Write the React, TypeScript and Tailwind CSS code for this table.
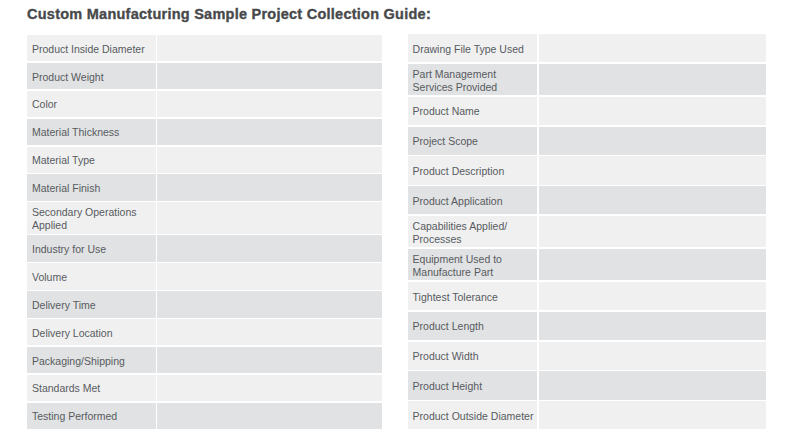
import React from "react";

type Row = { label: string[]; tall?: boolean };

const left: Row[] = [
  { label: ["Product Inside Diameter"] },
  { label: ["Product Weight"] },
  { label: ["Color"] },
  { label: ["Material Thickness"] },
  { label: ["Material Type"] },
  { label: ["Material Finish"] },
  { label: ["Secondary Operations", "Applied"], tall: true },
  { label: ["Industry for Use"] },
  { label: ["Volume"] },
  { label: ["Delivery Time"] },
  { label: ["Delivery Location"] },
  { label: ["Packaging/Shipping"] },
  { label: ["Standards Met"] },
  { label: ["Testing Performed"] },
];

const right: Row[] = [
  { label: ["Drawing File Type Used"] },
  { label: ["Part Management", "Services Provided"], tall: true },
  { label: ["Product Name"] },
  { label: ["Project Scope"] },
  { label: ["Product Description"] },
  { label: ["Product Application"] },
  { label: ["Capabilities Applied/", "Processes"], tall: true },
  { label: ["Equipment Used to", "Manufacture Part"], tall: true },
  { label: ["Tightest Tolerance"] },
  { label: ["Product Length"] },
  { label: ["Product Width"] },
  { label: ["Product Height"] },
  { label: ["Product Outside Diameter"] },
];

function Table({ rows, side }: { rows: Row[]; side: "l" | "r" }) {
  return (
    <div className={side === "l" ? "flex w-[355px] flex-col gap-y-[1.5px] mt-[1px]" : "flex w-[358.5px] flex-col gap-y-[1.5px]"}>
      {rows.map((r, i) => {
        const bg = i % 2 === 0 ? "bg-[#f0f0f0]" : "bg-[#e1e2e3]";
        const h = r.tall
          ? "h-[31.5px]"
          : side === "l"
          ? "h-[26.4px]"
          : "h-[28.3px]";
        return (
          <div key={i} className={`flex gap-x-[1.6px] ${h}`}>
            <div
              className={`${bg} ${side === "l" ? "w-[128.7px]" : "w-[129.4px]"} shrink-0 flex flex-col justify-center pl-[5px] pt-[2px] text-[10.5px] leading-[13px] text-[#575b5f]`}
            >
              {r.label.map((t, j) => (
                <span key={j} className="whitespace-nowrap">{t}</span>
              ))}
            </div>
            <div className={`${bg} flex-1`} />
          </div>
        );
      })}
    </div>
  );
}

export default function App() {
  return (
    <div
      className="w-[798px] h-[445px] bg-white px-[27px]"
      style={{ fontFamily: '"Liberation Sans", Arial, sans-serif' }}
    >
      <div className="pt-[4px] h-[34px] text-[14.5px] font-bold leading-[20px] tracking-[0.25px] text-[#48494b] [-webkit-text-stroke:0.35px_#48494b]">
        Custom Manufacturing Sample Project Collection Guide:
      </div>
      <div className="flex items-start gap-x-[25.6px]">
        <Table rows={left} side="l" />
        <Table rows={right} side="r" />
      </div>
    </div>
  );
}
